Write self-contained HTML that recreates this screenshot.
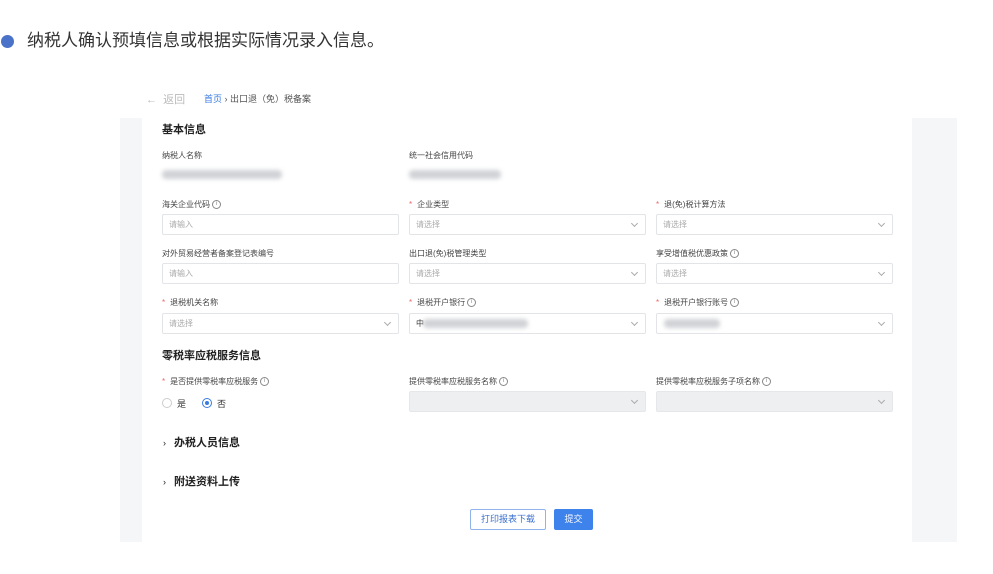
<!DOCTYPE html>
<html><head><meta charset="utf-8"><style>
*{margin:0;padding:0;box-sizing:border-box}
body{width:993px;height:574px;background:#fff;position:relative;overflow:hidden;font-family:"Liberation Sans","Noto Sans CJK SC",sans-serif;color:#333}
.a{position:absolute;white-space:nowrap}
.lbl{font-size:8px;color:#444;line-height:10px}
.req{color:#e66;margin-right:5px}
.inp{position:absolute;height:21px;border:1px solid #e2e4e8;border-radius:2px;background:#fff;font-size:8px;color:#aaa;padding-left:6px;line-height:19px}
.sel::after{content:"";position:absolute;right:8px;top:6px;width:4px;height:4px;border-right:1px solid #aaa;border-bottom:1px solid #aaa;transform:rotate(45deg)}
.dis{background:#eeeff1;border-color:#e6e7ea}
.blur{position:absolute;height:9px;background:#d0d2d6;border-radius:4px;filter:blur(2px)}
.i{display:inline-block;width:9px;height:9px;border:1px solid #888;border-radius:50%;font-size:6px;line-height:7px;text-align:center;color:#888;vertical-align:top;margin-left:2px}
.h{font-size:11px;font-weight:bold;color:#222}
</style></head><body>
<div class="a" style="left:1px;top:35px;width:13px;height:13px;border-radius:50%;background:#4a72c8"></div>
<div class="a" style="left:27px;top:30px;font-size:17px;color:#333;line-height:22px">纳税人确认预填信息或根据实际情况录入信息。</div>

<div class="a" style="left:146px;top:91px;font-size:11px;color:#bbb">←&nbsp; 返回</div>
<div class="a" style="left:204px;top:92px;font-size:9px;color:#555"><span style="color:#3a7be0">首页</span> › 出口退（免）税备案</div>

<div class="a" style="left:120px;top:118px;width:837px;height:424px;background:#f5f6f8"></div>
<div class="a" style="left:142px;top:118px;width:770px;height:424px;background:#fff"></div>

<div class="a h" style="left:162px;top:121px">基本信息</div>
<div class="a lbl" style="left:162px;top:151px">纳税人名称</div>
<div class="a lbl" style="left:409px;top:151px">统一社会信用代码</div>
<div class="blur" style="left:162px;top:170px;width:120px"></div>
<div class="blur" style="left:409px;top:170px;width:92px"></div>

<div class="a lbl" style="left:162px;top:200px">海关企业代码<span class="i">i</span></div>
<div class="inp" style="left:162px;top:214px;width:237px">请输入</div>
<div class="a lbl" style="left:409px;top:200px"><span class="req">*</span>企业类型</div>
<div class="inp sel" style="left:409px;top:214px;width:237px">请选择</div>
<div class="a lbl" style="left:656px;top:200px"><span class="req">*</span>退(免)税计算方法</div>
<div class="inp sel" style="left:656px;top:214px;width:237px">请选择</div>

<div class="a lbl" style="left:162px;top:249px">对外贸易经营者备案登记表编号</div>
<div class="inp" style="left:162px;top:263px;width:237px">请输入</div>
<div class="a lbl" style="left:409px;top:249px">出口退(免)税管理类型</div>
<div class="inp sel" style="left:409px;top:263px;width:237px">请选择</div>
<div class="a lbl" style="left:656px;top:249px">享受增值税优惠政策<span class="i">i</span></div>
<div class="inp sel" style="left:656px;top:263px;width:237px">请选择</div>

<div class="a lbl" style="left:162px;top:298px"><span class="req">*</span>退税机关名称</div>
<div class="inp sel" style="left:162px;top:313px;width:237px">请选择</div>
<div class="a lbl" style="left:409px;top:298px"><span class="req">*</span>退税开户银行<span class="i">i</span></div>
<div class="inp sel" style="left:409px;top:313px;width:237px;color:#333">中</div>
<div class="blur" style="left:423px;top:319px;width:105px"></div>
<div class="a lbl" style="left:656px;top:298px"><span class="req">*</span>退税开户银行账号<span class="i">i</span></div>
<div class="inp sel" style="left:656px;top:313px;width:237px"></div>
<div class="blur" style="left:664px;top:319px;width:56px"></div>

<div class="a h" style="left:162px;top:347px">零税率应税服务信息</div>
<div class="a lbl" style="left:162px;top:377px"><span class="req">*</span>是否提供零税率应税服务<span class="i">i</span></div>
<div class="a" style="left:162px;top:398px;width:10px;height:10px;border:1px solid #ccc;border-radius:50%"></div>
<div class="a" style="left:177px;top:397px;font-size:9px">是</div>
<div class="a" style="left:202px;top:398px;width:10px;height:10px;border:1px solid #3a7be0;border-radius:50%"><div style="margin:2px;width:4px;height:4px;border-radius:50%;background:#3a7be0"></div></div>
<div class="a" style="left:217px;top:397px;font-size:9px">否</div>
<div class="a lbl" style="left:409px;top:377px">提供零税率应税服务名称<span class="i">i</span></div>
<div class="inp sel dis" style="left:409px;top:391px;width:237px"></div>
<div class="a lbl" style="left:656px;top:377px">提供零税率应税服务子项名称<span class="i">i</span></div>
<div class="inp sel dis" style="left:656px;top:391px;width:237px"></div>

<div class="a h" style="left:163px;top:434px"><span style="font-weight:normal;font-size:9px;margin-right:8px">›</span>办税人员信息</div>
<div class="a h" style="left:163px;top:473px"><span style="font-weight:normal;font-size:9px;margin-right:8px">›</span>附送资料上传</div>

<div class="a" style="left:470px;top:509px;width:76px;height:21px;border:1px solid #8fb3ea;border-radius:2px;font-size:9px;color:#3a6fcf;text-align:center;line-height:19px">打印报表下载</div>
<div class="a" style="left:554px;top:509px;width:39px;height:21px;background:#3e82ec;border-radius:2px;font-size:9px;color:#fff;text-align:center;line-height:21px">提交</div>
</body></html>
